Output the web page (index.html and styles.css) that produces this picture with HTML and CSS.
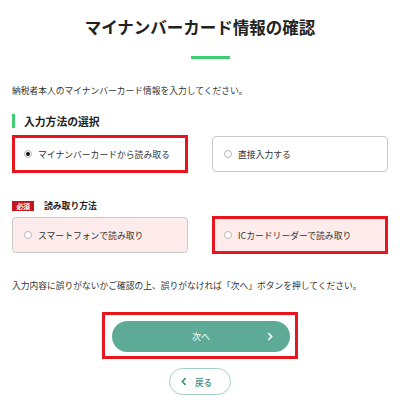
FILE: index.html
```html
<!DOCTYPE html>
<html lang="ja">

<head>
  <meta charset="UTF-8" />
  <title>マイナンバーカード情報の確認</title>
  <link rel="stylesheet" href="styles.css">
</head>

<body>
  <div class="page">
    <h1 class="title">マイナンバーカード情報の確認</h1>
    <div class="title-line"></div>

    <p class="lead">納税者本人のマイナンバーカード情報を入力してください。</p>

    <!-- 入力方法 -->
    <h2 class="heading">入力方法の選択</h2>
    <div class="choices">
      <label class="opt marked">
        <span class="radio checked"></span>
        <span>マイナンバーカードから読み取る</span>
      </label>
      <label class="opt">
        <span class="radio"></span>
        <span>直接入力する</span>
      </label>
    </div>

    <!-- 読み取り方法 -->
    <div class="field-label">
      <span class="badge">必須</span>
      <span class="label-text">読み取り方法</span>
    </div>
    <div class="choices">
      <label class="opt pink">
        <span class="radio"></span>
        <span>スマートフォンで読み取り</span>
      </label>
      <label class="opt pink marked">
        <span class="radio"></span>
        <span>ICカードリーダーで読み取り</span>
      </label>
    </div>

    <p class="note">入力内容に誤りがないかご確認の上、誤りがなければ「次へ」ボタンを押してください。</p>

    <div class="actions">
      <div class="next-wrap">
        <button class="btn-next">
          <span>次へ</span>
          <svg class="chev-next" width="6" height="9" viewBox="0 0 6 9">
            <polyline points="1.2,1 4.6,4.5 1.2,8" fill="none" stroke="#fff" stroke-width="1.6" />
          </svg>
        </button>
      </div>
      <button class="btn-back">
        <svg width="6" height="9" viewBox="0 0 6 9">
          <polyline points="4.6,1 1.4,4.5 4.6,8" fill="none" stroke="#3d8d77" stroke-width="1.6" />
        </svg>
        <span>戻る</span>
      </button>
    </div>
  </div>
</body>

</html>
```

FILE: styles.css
```css
:root {
  --text: #333;
  --green: #3fcf72;
  --teal: #5dab97;
  --teal-dark: #3d8d77;
  --mark: #e8151f;
  --line: #c9c9c9;
  --pink: #fdeceb;
}
* {
  box-sizing: border-box;
  margin: 0;
  padding: 0;
}
body {
  background: #fff;
  color: var(--text);
  font-family: "Noto Sans CJK JP", "Noto Sans", sans-serif;
}
.page {
  padding: 15px 12px 0;
}
.title {
  font-size: 16.5px;
  line-height: 24px;
  font-weight: 700;
  text-align: center;
  color: #222;
}
.title-line {
  width: 39px;
  height: 3px;
  margin: 17px auto 0;
  margin-left: 179px;
  background: var(--green);
}
.lead,
.note {
  font-size: 8.75px;
  line-height: 14px;
}
.lead {
  margin-top: 25px;
}
.heading {
  margin-top: 16px;
  font-size: 10.8px;
  line-height: 14px;
  font-weight: 700;
  color: #222;
  padding-left: 9px;
  border-left: 3px solid var(--green);
}
/* 選択肢 */
.choices {
  display: grid;
  grid-template-columns: 176px 176px;
  column-gap: 24px;
  align-items: center;
  height: 38px;
  margin-top: 7px;
}
.opt {
  display: flex;
  align-items: center;
  gap: 6px;
  height: 36px;
  padding-left: 11px;
  border: 1px solid var(--line);
  border-radius: 4px;
  font-size: 8.8px;
  background: #fff;
}
.opt.pink {
  background: var(--pink);
}
.opt.marked {
  height: 38px;
  padding-left: 9px;
  border: 3px solid var(--mark);
  border-radius: 0;
}
.radio {
  width: 8px;
  height: 8px;
  border: 1px solid #b5b5b5;
  border-radius: 50%;
  background: #fff;
  display: flex;
  align-items: center;
  justify-content: center;
}
.radio.checked::after {
  content: "";
  width: 4px;
  height: 4px;
  border-radius: 50%;
  background: #111;
}
.field-label {
  display: flex;
  align-items: center;
  gap: 10px;
  margin-top: 27px;
  height: 11px;
}
.badge {
  display: inline-block;
  width: 22px;
  height: 10px;
  line-height: 10px;
  background: #c4161d;
  color: #fff;
  font-size: 7px;
  font-weight: 700;
  text-align: center;
  letter-spacing: -0.5px;
}
.label-text {
  font-size: 8.8px;
  font-weight: 700;
  color: #222;
}
.field-label + .choices {
  margin-top: 5px;
}
.note {
  margin-top: 25px;
}
/* ボタン */
.actions {
  display: flex;
  flex-direction: column;
  align-items: center;
  margin-top: 19px;
}
.next-wrap {
  width: 196px;
  padding: 6px 5px 4px 7px;
  border: 3px solid var(--mark);
}
.btn-next {
  position: relative;
  display: flex;
  align-items: center;
  justify-content: center;
  width: 178px;
  height: 31px;
  border: none;
  border-radius: 16px;
  background: var(--teal);
  color: #fff;
  font-family: inherit;
  font-size: 9px;
}
.chev-next {
  position: absolute;
  right: 17px;
  top: 11px;
}
.btn-back {
  display: flex;
  align-items: center;
  gap: 8px;
  margin-top: 9px;
  width: 62px;
  height: 27px;
  padding-left: 11px;
  border: 1px solid #9fd0c1;
  border-radius: 14px;
  background: #fff;
  color: var(--teal-dark);
  font-family: inherit;
  font-size: 8.6px;
  font-weight: 500;
}
```
